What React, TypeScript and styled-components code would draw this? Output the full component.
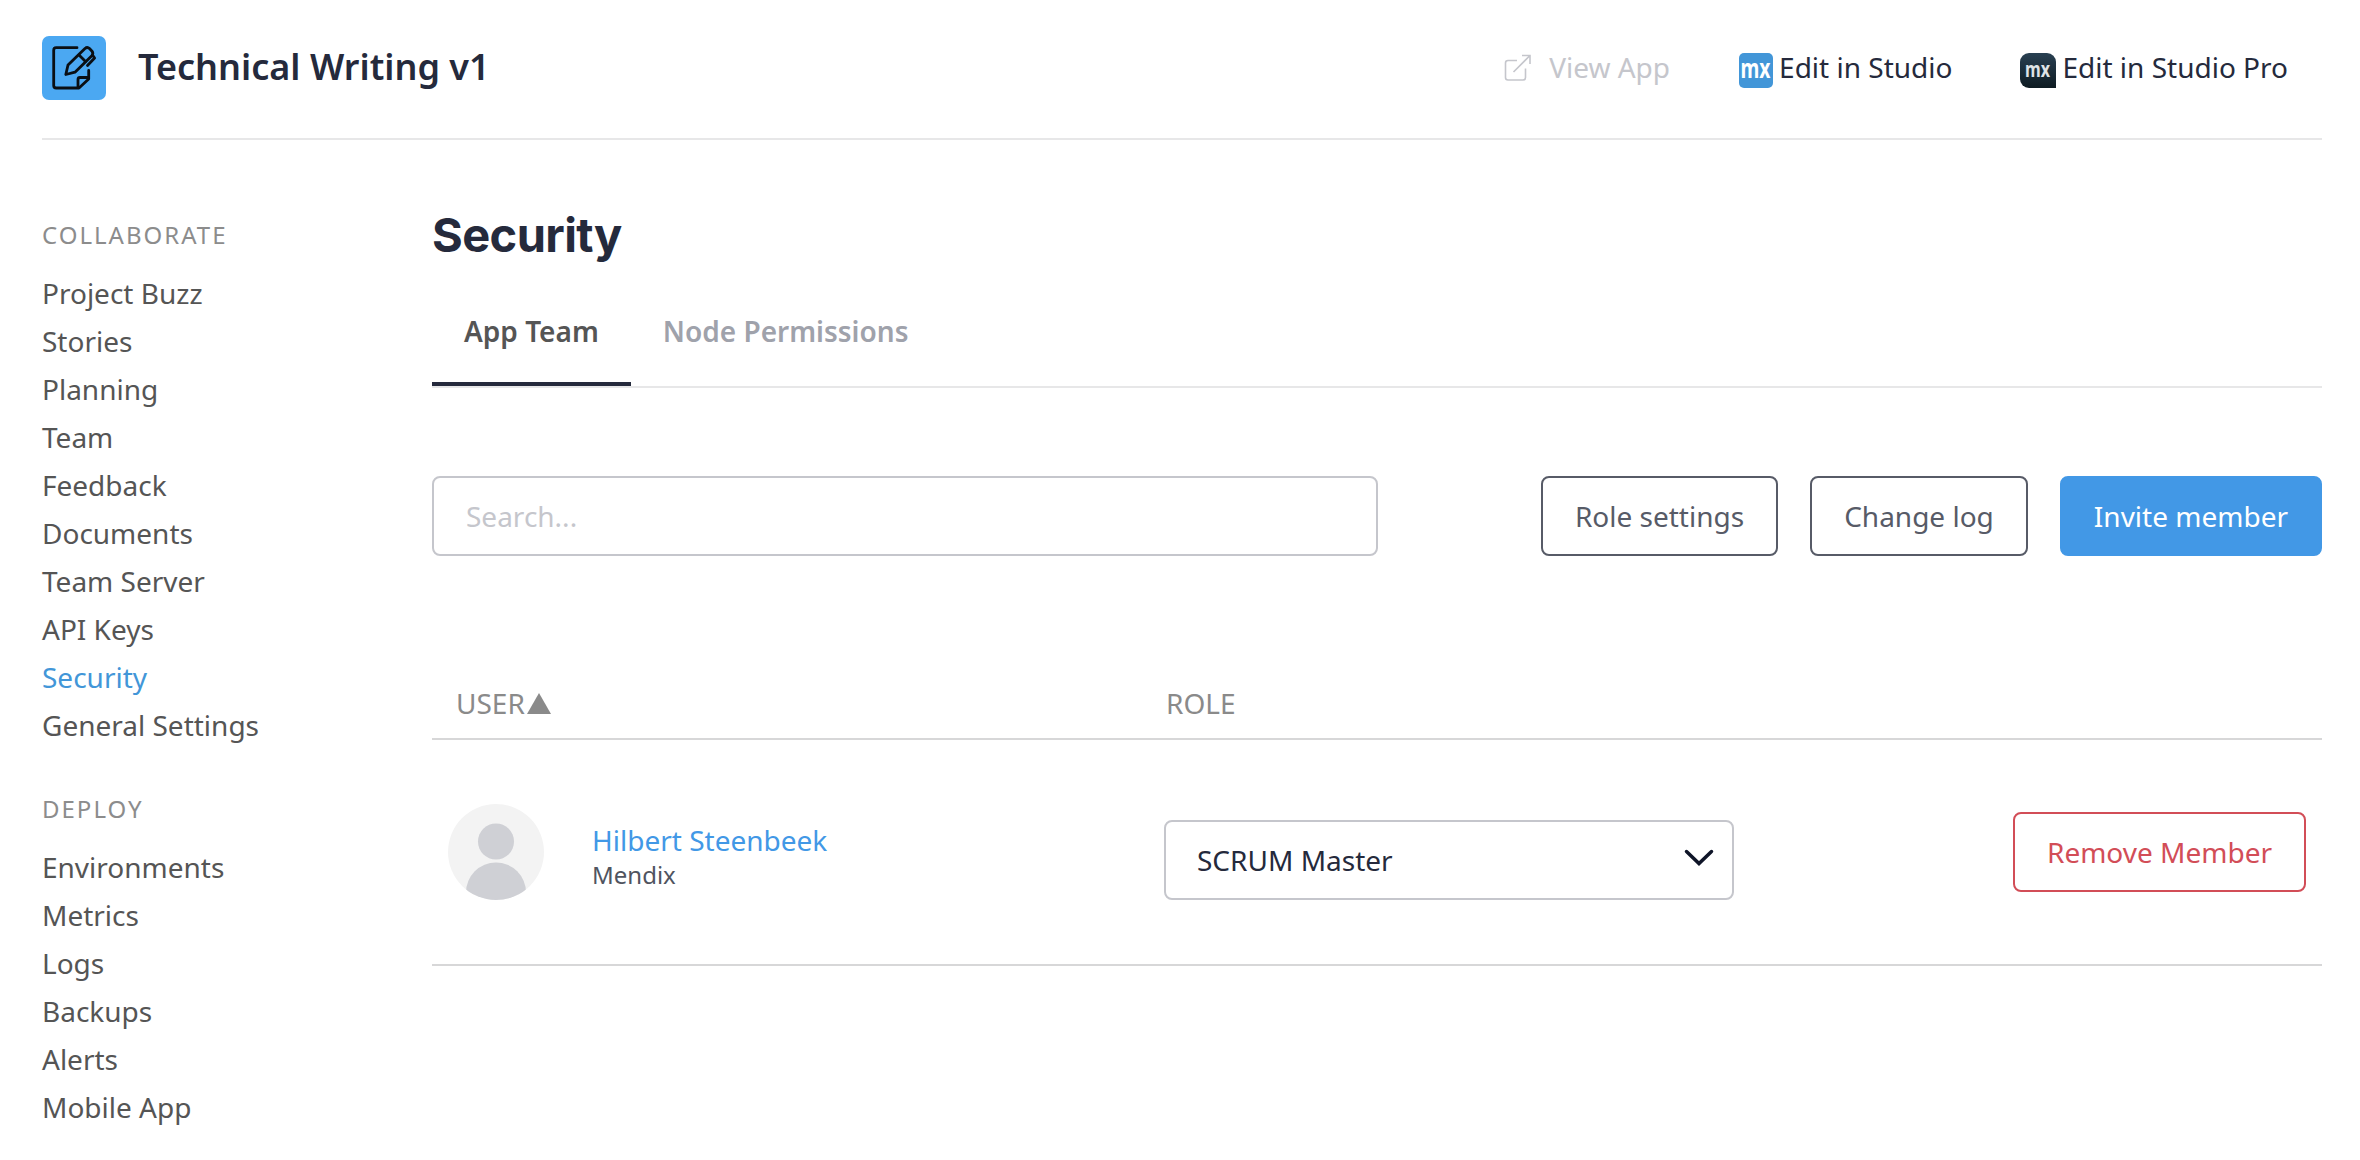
import React from "react";
import styled, { createGlobalStyle } from "styled-components";

const GlobalStyle = createGlobalStyle`
  * { box-sizing: border-box; }
  body {
    margin: 0;
    background: #fff;
    color: #555;
    font-family: "Noto Sans", sans-serif;
    font-size: 28px;
    line-height: 48px;
  }
`;

const Page = styled.div`
  width: 2360px;
  height: 1160px;
  padding: 0 38px 0 42px;
  overflow: hidden;
`;

const Header = styled.header`
  display: flex;
  align-items: center;
  height: 140px;
  padding: 0 34px 4px 0;
  border-bottom: 2px solid #e7e7e8;
`;

const AppLogo = styled.svg`
  width: 64px;
  height: 64px;
  flex: none;
  margin-top: 2px;
`;

const AppName = styled.div`
  margin-left: 32px;
  font-size: 36px;
  font-weight: 600;
  color: #252a3c;
`;

const Actions = styled.nav`
  display: flex;
  align-items: center;
  margin-left: auto;
`;

const Action = styled.a<{ $muted?: boolean; $gap: number; $before?: number }>`
  display: flex;
  align-items: center;
  gap: ${(p) => p.$gap}px;
  margin-left: ${(p) => p.$before ?? 0}px;
  color: ${(p) => (p.$muted ? "#c5c6cc" : "#252a3c")};
`;

const OpenIcon = styled.svg`
  width: 28px;
  height: 28px;
  margin-top: 2px;
`;

const Badge = styled.svg`
  height: 35px;
  margin-top: 6px;
  overflow: visible;
`;

const Body = styled.div`
  display: grid;
  grid-template-columns: 390px 1fr;
`;

const Sidebar = styled.aside`
  padding-top: 77px;
`;

const NavGroup = styled.section`
  margin-bottom: 42px;
`;

const NavTitle = styled.h2`
  margin: 0 0 16px;
  font-size: 24px;
  font-weight: 400;
  line-height: 36px;
  letter-spacing: 2px;
  color: #8c8c8c;
`;

const NavItem = styled.a<{ $active?: boolean }>`
  display: block;
  color: ${(p) => (p.$active ? "#4296d8" : "#555")};
`;

const Main = styled.main`
  padding-top: 63px;
`;

const Title = styled.h1`
  margin: 0 0 1px;
  font-family: Inter, sans-serif;
  font-size: 47px;
  font-weight: 700;
  line-height: 64px;
  letter-spacing: -0.6px;
  color: #252a3c;
`;

const Tabs = styled.div`
  display: flex;
  height: 120px;
  border-bottom: 2px solid #e7e7e8;
`;

const Tab = styled.div<{ $active?: boolean }>`
  padding: 39px 32px 0;
  border-bottom: 4px solid ${(p) => (p.$active ? "#252a3c" : "transparent")};
  font-weight: 600;
  color: ${(p) => (p.$active ? "#555" : "#9fa2ab")};
`;

const Toolbar = styled.div`
  display: flex;
  gap: 32px;
  margin-top: 88px;
`;

const Search = styled.input`
  width: 946px;
  height: 80px;
  margin-right: auto;
  padding: 0 32px;
  border: 2px solid #c5c6cc;
  border-radius: 8px;
  font: inherit;
  &::placeholder { color: #c5c6cc; opacity: 1; }
`;

const Button = styled.button<{ $tone: string; $filled?: boolean }>`
  height: 80px;
  padding: 0 32px;
  border: 2px solid ${(p) => p.$tone};
  border-radius: 8px;
  background: ${(p) => (p.$filled ? p.$tone : "#fff")};
  color: ${(p) => (p.$filled ? "#fff" : p.$tone)};
  font: inherit;
  white-space: nowrap;
`;

const Row = styled.div`
  display: grid;
  grid-template-columns: 732px 570px 1fr;
  border-bottom: 2px solid #d7d7d8;
`;

const HeadRow = styled(Row)`
  height: 61px;
  margin-top: 123px;
  color: #8a8a8a;
`;

const HeadCell = styled.div<{ $indent: number }>`
  display: flex;
  align-items: flex-start;
  padding-left: ${(p) => p.$indent}px;
`;

const SortArrow = styled.svg`
  width: 24px;
  height: 21px;
  margin: 14px 0 0 2px;
`;

const UserRow = styled(Row)`
  height: 226px;
  padding-top: 64px;
`;

const UserCell = styled.div`
  display: flex;
  padding-left: 16px;
`;

const Avatar = styled.svg`
  width: 96px;
  height: 96px;
  margin-right: 48px;
`;

const Person = styled.div`
  padding-top: 12px;
`;

const PersonName = styled.div`
  color: #4298e6;
  line-height: 48px;
`;

const Company = styled.div`
  font-size: 24px;
  line-height: 34px;
  margin-top: -6px;
  color: #50545f;
`;

const Select = styled.div`
  display: flex;
  align-items: center;
  justify-content: space-between;
  height: 80px;
  margin-top: 16px;
  padding: 0 18px 0 31px;
  border: 2px solid #c5c6cc;
  border-radius: 8px;
  color: #252a3c;
`;

const Chevron = styled.svg`
  width: 30px;
  height: 18px;
  margin-top: -4px;
`;

const ActionCell = styled.div`
  display: flex;
  justify-content: flex-end;
  align-items: flex-start;
  padding: 8px 16px 0 0;
`;

const collaborate = ["Project Buzz", "Stories", "Planning", "Team", "Feedback", "Documents", "Team Server", "API Keys", "Security", "General Settings"];
const deploy = ["Environments", "Metrics", "Logs", "Backups", "Alerts", "Mobile App"];

function MxBadge({ dark }: { dark?: boolean }) {
  return (
    <Badge width={dark ? 36 : 34} viewBox={dark ? "0 0 36 35" : "0 0 34 35"}>
      <defs>
        <linearGradient id="badgeDark" x1="0" y1="0" x2="0" y2="1">
          <stop offset="0" stopColor="#294052" />
          <stop offset="1" stopColor="#0e1b22" />
        </linearGradient>
      </defs>
      {dark ? (
        <path d="M9 0H27A9 9 0 0 1 36 9V35H9A9 9 0 0 1 0 26V9A9 9 0 0 1 9 0Z" fill="url(#badgeDark)" />
      ) : (
        <rect width="34" height="35" rx="5" fill="#4296d8" />
      )}
      <text
        x={dark ? 5 : 1.5}
        y={dark ? 23.5 : 24.5}
        textLength={dark ? 25 : 30}
        lengthAdjust="spacingAndGlyphs"
        fontFamily="Noto Sans"
        fontWeight="700"
        fontSize={dark ? 22 : 26}
        fill={dark ? "#dfe3e6" : "#fff"}
      >
        mx
      </text>
    </Badge>
  );
}

export default function App() {
  return (
    <>
      <GlobalStyle />
      <Page>
        <Header>
          <AppLogo viewBox="0 0 64 64">
            <rect width="64" height="64" rx="7" fill="#4ba8f2" />
            <g fill="none" stroke="#0a0f14" strokeWidth="2.8" strokeLinecap="round" strokeLinejoin="round">
              <path d="M35 11.700H14.200Q11.700 11.700 11.700 14.200V49.500Q11.700 52 14.200 52H37L46.700 43V34.500" />
              <path d="M36 51.500V43.500Q36 41.500 38 41.500H46" />
              <path d="M23.800 38.500 26 29 43 12.500Q45.300 10.400 47.500 12.500L50 15.200Q51.700 17.500 49.800 19.700L33 36.200Z" />
              <path d="M37 19 43.500 25.500M50.500 19 52.600 22 45.500 29.500" />
            </g>
          </AppLogo>
          <AppName>Technical Writing v1</AppName>
          <Actions>
            <Action $muted $gap={17}>
              <OpenIcon viewBox="0 0 28 28" fill="none" stroke="#c5c6cc" strokeWidth="1.600">
                <path d="M13 6.500H4Q1.500 6.500 1.500 9V23.500Q1.500 26 4 26H19Q21.500 26 21.500 23.500V14.500M9.500 18 26 1.500M18 1.500H26V10" />
              </OpenIcon>
              View App
            </Action>
            <Action $gap={6} $before={69}>
              <MxBadge />
              Edit in Studio
            </Action>
            <Action $gap={6} $before={68}>
              <MxBadge dark />
              Edit in Studio Pro
            </Action>
          </Actions>
        </Header>
        <Body>
          <Sidebar>
            <NavGroup>
              <NavTitle>COLLABORATE</NavTitle>
              {collaborate.map((item) => (
                <NavItem key={item} $active={item === "Security"}>{item}</NavItem>
              ))}
            </NavGroup>
            <NavGroup>
              <NavTitle>DEPLOY</NavTitle>
              {deploy.map((item) => (
                <NavItem key={item}>{item}</NavItem>
              ))}
            </NavGroup>
          </Sidebar>
          <Main>
            <Title>Security</Title>
            <Tabs>
              <Tab $active>App Team</Tab>
              <Tab>Node Permissions</Tab>
            </Tabs>
            <Toolbar>
              <Search placeholder="Search..." />
              <Button $tone="#575b67">Role settings</Button>
              <Button $tone="#575b67">Change log</Button>
              <Button $tone="#4298e6" $filled>Invite member</Button>
            </Toolbar>
            <HeadRow>
              <HeadCell $indent={24}>
                USER
                <SortArrow viewBox="0 0 24 21"><path d="M12 0 24 21H0Z" fill="#8a8a8a" /></SortArrow>
              </HeadCell>
              <HeadCell $indent={2}>ROLE</HeadCell>
            </HeadRow>
            <UserRow>
              <UserCell>
                <Avatar viewBox="0 0 96 96">
                  <defs>
                    <clipPath id="avatarClip"><circle cx="48" cy="48" r="48" /></clipPath>
                  </defs>
                  <circle cx="48" cy="48" r="48" fill="#f3f3f3" />
                  <g clipPath="url(#avatarClip)" fill="#cfd0d5">
                    <circle cx="48" cy="37.500" r="18" />
                    <circle cx="48" cy="88.500" r="30" />
                  </g>
                </Avatar>
                <Person>
                  <PersonName>Hilbert Steenbeek</PersonName>
                  <Company>Mendix</Company>
                </Person>
              </UserCell>
              <Select>
                SCRUM Master
                <Chevron viewBox="0 0 30 18" fill="none" stroke="#0f1528" strokeWidth="3.500" strokeLinecap="round">
                  <path d="M2.500 2.500 15 14.500 27.500 2.500" />
                </Chevron>
              </Select>
              <ActionCell>
                <Button $tone="#d24d57">Remove Member</Button>
              </ActionCell>
            </UserRow>
          </Main>
        </Body>
      </Page>
    </>
  );
}
